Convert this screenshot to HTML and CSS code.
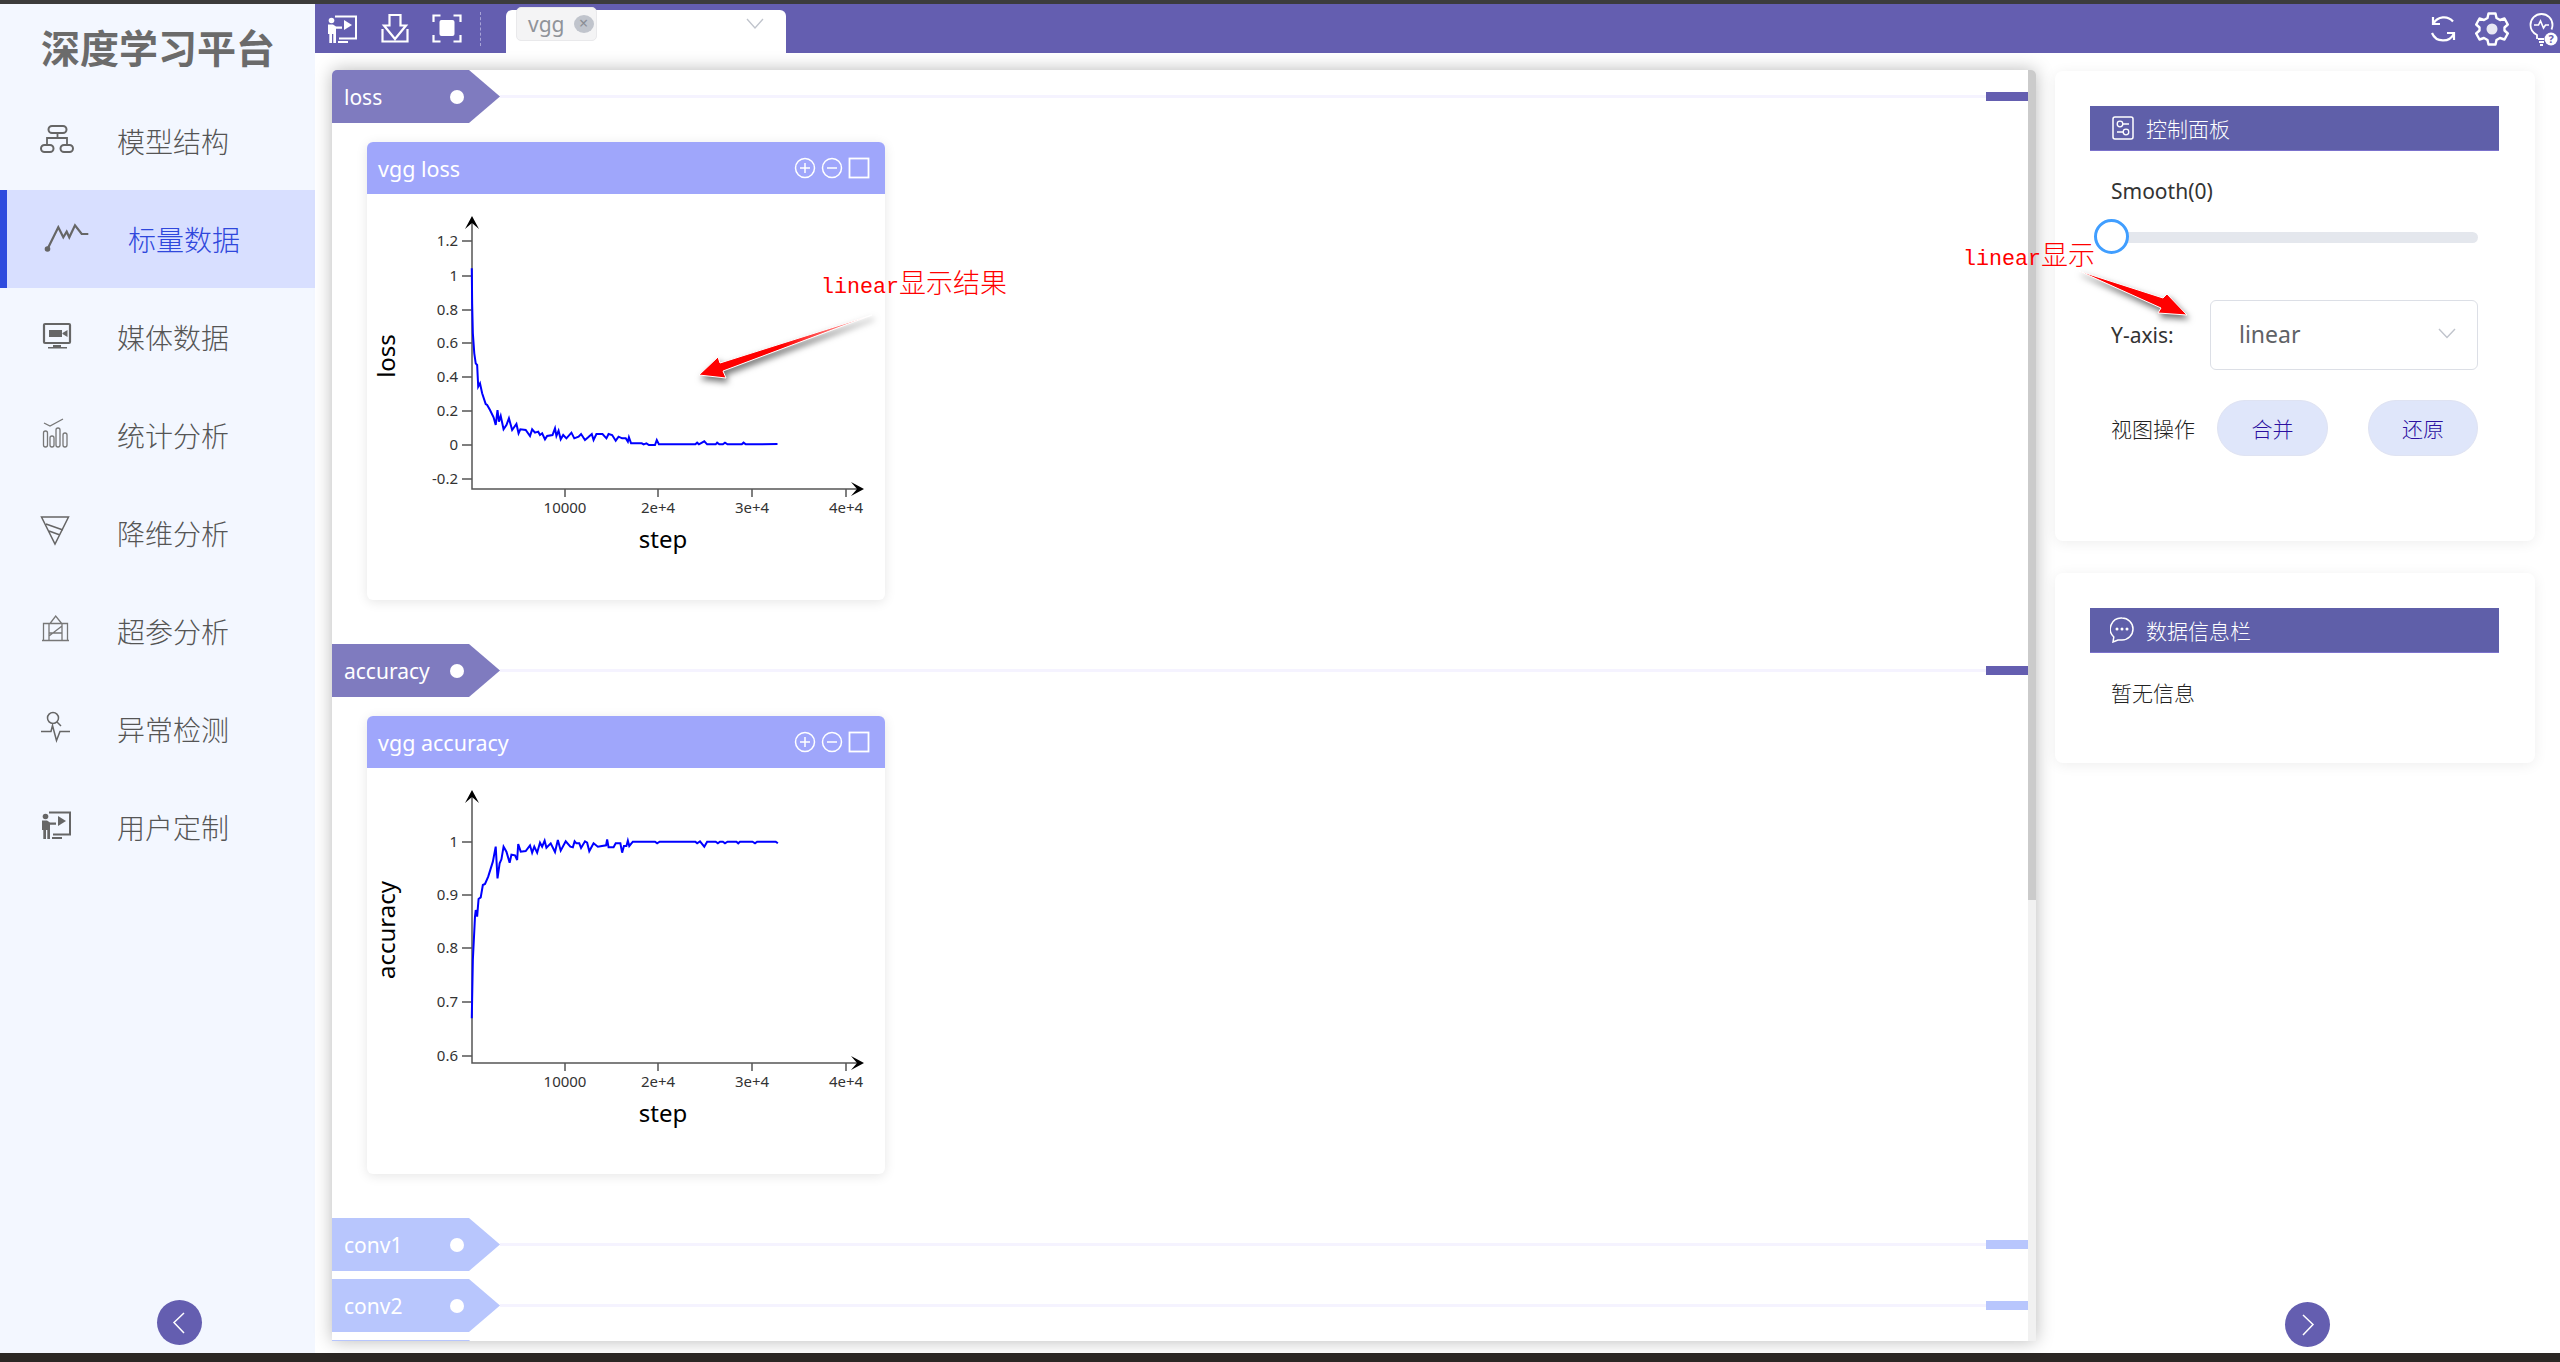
FILE: index.html
```html
<!DOCTYPE html>
<html lang="zh-CN">
<head>
  <meta charset="UTF-8" />
  <title>深度学习平台</title>
  <link rel="stylesheet" href="styles.css">
</head>
<body>

  <svg class="defs" width="0" height="0">
    <symbol id="ic-present" viewBox="0 0 31 28">
      <circle cx="4.500" cy="5.500" r="2.800" fill="currentColor"/>
      <path d="M1 9.500h5l3 2h6v2.300H9V28H6.300v-9H5v9H2.300v-9H1z" fill="currentColor"/>
      <path d="M8 1.500h21v22H12M11 27h10" fill="none" stroke="currentColor" stroke-width="2"/>
      <path d="M17 5l8 5-8 5z" fill="currentColor"/>
    </symbol>
    <symbol id="ic-circle-plus" viewBox="0 0 22 22">
      <circle cx="11" cy="11" r="9.500" fill="none" stroke="currentColor" stroke-width="1.500"/>
      <path d="M6 11h10M11 6v10" stroke="currentColor" stroke-width="1.500"/>
    </symbol>
    <symbol id="ic-circle-minus" viewBox="0 0 22 22">
      <circle cx="11" cy="11" r="9.500" fill="none" stroke="currentColor" stroke-width="1.500"/>
      <path d="M6 11h10" stroke="currentColor" stroke-width="1.500"/>
    </symbol>
    <symbol id="ic-square" viewBox="0 0 22 22">
      <rect x="1.500" y="1.500" width="19" height="19" fill="none" stroke="currentColor" stroke-width="1.800"/>
    </symbol>
    <symbol id="axes" viewBox="367 194 518 406">
      <path d="M472 222V489H857" fill="none" stroke="#555" stroke-width="1.500"/>
      <path d="M472 216l7 13-7-6-7 6z" fill="#000"/>
      <path d="M864 489l-13-7 6 7-6 7z" fill="#000"/>
      <path d="M565 489v8M658 489v8M752 489v8M846 489v8" stroke="#555" stroke-width="1.500"/>
    </symbol>
  </svg>

  <div class="app">
    <nav class="sidebar">
      <div class="logo">深度学习平台</div>
      <ul class="menu">
        <li class="menu-item">
          <svg class="menu-icon" viewBox="0 0 36 32"><path d="M17.500 8v5M7 20v-7h20v7" fill="none" stroke="#666" stroke-width="1.800"/><rect x="8.500" y="1" width="18" height="7" rx="3.500" fill="none" stroke="#666" stroke-width="2"/><rect x="1" y="20" width="12.500" height="7" rx="3.500" fill="none" stroke="#666" stroke-width="2"/><rect x="20.500" y="20" width="12.500" height="7" rx="3.500" fill="none" stroke="#666" stroke-width="2"/></svg>
          模型结构
        </li>
        <li class="menu-item active">
          <svg class="menu-icon" viewBox="0 0 46 32"><circle cx="2.500" cy="26" r="2.800" fill="#666"/><path d="M2.500 26L13.300 4.300l5 10 3.400-5.600 2.600 5.600L30 2.300 36.700 11h6.600" fill="none" stroke="#666" stroke-width="2.200"/></svg>
          标量数据
        </li>
        <li class="menu-item">
          <svg class="menu-icon" viewBox="0 0 36 32"><rect x="4" y="3" width="26" height="19" rx="1" fill="none" stroke="#666" stroke-width="2.200"/><path d="M9 9h13v7H9zM22.500 12l5-3v7l-5-3z" fill="#666"/><path d="M13 24h8v2H13zM8 26h19v1.500H8z" fill="#666"/></svg>
          媒体数据
        </li>
        <li class="menu-item">
          <svg class="menu-icon" viewBox="0 0 36 32"><g fill="none" stroke="#777" stroke-width="1.300"><rect x="3.500" y="12" width="4" height="16" rx="2"/><rect x="10" y="17" width="4" height="11" rx="2"/><rect x="16" y="9" width="4" height="19" rx="2"/><rect x="23" y="14" width="4" height="14" rx="2"/><path d="M4 4l6 3 13-7"/></g></svg>
          统计分析
        </li>
        <li class="menu-item">
          <svg class="menu-icon" viewBox="0 0 36 32"><path d="M1.500 0h27L15 27zM6 7l17 6M9 14l11 4" fill="none" stroke="#666" stroke-width="1.500"/></svg>
          降维分析
        </li>
        <li class="menu-item">
          <svg class="menu-icon" viewBox="0 0 36 32"><path d="M2 25.500h27M3.500 25V8.500h24V25M10 8.500L15.700 1l6 7.500M9 25V8.500M22 25V8.500M9 18h13M9 21l13-10" fill="none" stroke="#777" stroke-width="1.300"/></svg>
          超参分析
        </li>
        <li class="menu-item">
          <svg class="menu-icon" viewBox="0 0 36 32"><circle cx="13" cy="5" r="5.500" fill="none" stroke="#666" stroke-width="1.500"/><path d="M17 9l4 4M1 18.500h10l1.500-6 4 15 3.500-9h10" fill="none" stroke="#666" stroke-width="1.500"/></svg>
          异常检测
        </li>
        <li class="menu-item">
          <svg class="menu-icon" viewBox="0 0 36 32"><use href="#ic-present" x="1" y="0" width="31" height="28" color="#666"/></svg>
          用户定制
        </li>
      </ul>
      <button class="float-btn float-left"><svg viewBox="0 0 45 45"><path d="M27 13L17 22.500 27 33" fill="none" stroke="#fff" stroke-width="1.500"/></svg></button>
    </nav>

    <div class="workspace">
      <header class="topbar">
        <svg class="tool-icon" width="31" height="28"><use href="#ic-present"/></svg>
        <svg class="tool-icon tool-gap" width="28" height="29" viewBox="0 0 28 29"><path d="M8.500 1h11v10.500h5.500L14 25 3 11.500h5.500zM1.500 15v12.500h25V15" fill="none" stroke="currentColor" stroke-width="2.200"/></svg>
        <svg class="tool-icon tool-gap" width="30" height="29" viewBox="0 0 30 29"><path d="M1.500 8V1.500h7M21.500 1.500h7V8M1.500 21v6.500h7M21.500 27.500h7V21" fill="none" stroke="currentColor" stroke-width="2.200"/><rect x="7.500" y="6" width="15" height="16" rx="2" fill="currentColor"/></svg>
        <span class="tool-sep"></span>
        <div class="tab">
          <span class="chip">vgg <i class="chip-close">×</i></span>
          <svg class="tab-arrow" width="18" height="11" viewBox="0 0 18 11"><path d="M1 1l8 9 8-9" fill="none" stroke="#c0c4cc" stroke-width="1.300"/></svg>
        </div>
        <div class="top-right">
          <svg width="27" height="27" viewBox="0 0 27 27"><path d="M23 6.500A12 12 0 0 0 3.500 8.500M2 18A12 12 0 0 0 24 18.500M3 2v7h7M24 25v-7h-7" fill="none" stroke="currentColor" stroke-width="2.200"/></svg>
          <svg width="34" height="34" viewBox="0 0 34 34"><path d="M13.500 1.500h7l1 4.500 3.500 2 4.500-1.500 3.300 6-3.300 3v3l3.300 3-3.300 6-4.500-1.500-3.500 2-1 4.500h-7l-1-4.500-3.500-2-4.500 1.500-3.300-6 3.300-3v-3l-3.300-3 3.300-6L9 8l3.500-2z" fill="none" stroke="currentColor" stroke-width="2.400" stroke-linejoin="round"/><circle cx="17" cy="17" r="5.500" fill="currentColor" opacity=".85"/></svg>
          <svg class="bulb" width="30" height="36" viewBox="0 0 30 36"><path d="M10 28v-4C6 22 3.500 18 3.500 14a11 11 0 0 1 22 0c0 1.500-.3 3-1 4.500" fill="none" stroke="currentColor" stroke-width="1.800"/><path d="M7 14h4.500l2-4 3 7 2-3h3.500" fill="none" stroke="currentColor" stroke-width="1.600"/><path d="M11 28h6M12 31h5M13 34h3" stroke="currentColor" stroke-width="1.800"/><circle cx="24" cy="28" r="6.500" fill="currentColor"/><text class="bulb-q" x="24" y="32">?</text></svg>
        </div>
      </header>

      <div class="content">
        <main class="panel">
          <div class="panel-scroll">
            <section class="group">
              <div class="group-head">
                <div class="group-tag tag-open">loss<span class="tag-dot"></span></div>
                <div class="group-line"></div>
                <div class="group-mark"></div>
              </div>
              <div class="chart-card">
                <div class="card-head">
                  vgg loss
                  <span class="card-tools">
                    <svg width="22" height="22"><use href="#ic-circle-plus"/></svg>
                    <svg width="22" height="22"><use href="#ic-circle-minus"/></svg>
                    <svg width="22" height="22"><use href="#ic-square"/></svg>
                  </span>
                </div>
                <svg class="chart" viewBox="367 194 518 406" width="518" height="406">
                  <use href="#axes" x="367" y="194" width="518" height="406"/>
                  <path d="M462 241h10M462 276h10M462 310h10M462 343h10M462 377h10M462 411h10M462 445h10M462 479h10" stroke="#555" stroke-width="1.500"/>
                  <text class="tick-y" x="458" y="246">1.2</text>
                  <text class="tick-y" x="458" y="281">1</text>
                  <text class="tick-y" x="458" y="315">0.8</text>
                  <text class="tick-y" x="458" y="348">0.6</text>
                  <text class="tick-y" x="458" y="382">0.4</text>
                  <text class="tick-y" x="458" y="416">0.2</text>
                  <text class="tick-y" x="458" y="450">0</text>
                  <text class="tick-y" x="458" y="484">-0.2</text>
                  <text class="tick-x" x="565" y="513">10000</text>
                  <text class="tick-x" x="658" y="513">2e+4</text>
                  <text class="tick-x" x="752" y="513">3e+4</text>
                  <text class="tick-x" x="846" y="513">4e+4</text>
                  <text class="axis-name" x="663" y="548">step</text>
                  <text class="axis-name" transform="translate(395 356) rotate(-90)">loss</text>
                  <polyline class="curve" transform="translate(340 130) scale(.35714 .33333)" points="369,415 370,520 372,610 376,670 380,700 384,705 387,770 392,760 398,790 408,822 412,825 420,840 430,862 436,885 441,840 445,875 450,858 458,898 466,885 473,865 482,900 494,882 500,910 505,898 520,900 532,918 538,898 546,908 555,905 560,915 566,910 574,928 580,918 595,915 602,895 606,918 612,902 618,928 625,915 634,925 648,908 656,925 668,920 675,912 686,930 695,922 705,912 710,930 718,912 735,912 746,925 752,912 762,915 772,932 780,920 790,925 800,925 806,935 809,922 815,940 845,940 850,943 858,940 865,945 882,945 887,930 893,943 995,943 1000,938 1005,943 1020,934 1028,943 1052,943 1056,938 1062,943 1072,943 1078,938 1085,943 1125,943 1130,938 1136,943 1225,942"/>
                </svg>
              </div>
            </section>

            <section class="group">
              <div class="group-head">
                <div class="group-tag tag-open">accuracy<span class="tag-dot"></span></div>
                <div class="group-line"></div>
                <div class="group-mark"></div>
              </div>
              <div class="chart-card">
                <div class="card-head">
                  vgg accuracy
                  <span class="card-tools">
                    <svg width="22" height="22"><use href="#ic-circle-plus"/></svg>
                    <svg width="22" height="22"><use href="#ic-circle-minus"/></svg>
                    <svg width="22" height="22"><use href="#ic-square"/></svg>
                  </span>
                </div>
                <svg class="chart" viewBox="367 194 518 406" width="518" height="406">
                  <use href="#axes" x="367" y="194" width="518" height="406"/>
                  <path d="M462 268h10M462 321h10M462 374h10M462 428h10M462 482h10" stroke="#555" stroke-width="1.500"/>
                  <text class="tick-y" x="458" y="273">1</text>
                  <text class="tick-y" x="458" y="326">0.9</text>
                  <text class="tick-y" x="458" y="379">0.8</text>
                  <text class="tick-y" x="458" y="433">0.7</text>
                  <text class="tick-y" x="458" y="487">0.6</text>
                  <text class="tick-x" x="565" y="513">10000</text>
                  <text class="tick-x" x="658" y="513">2e+4</text>
                  <text class="tick-x" x="752" y="513">3e+4</text>
                  <text class="tick-x" x="846" y="513">4e+4</text>
                  <text class="axis-name" x="663" y="548">step</text>
                  <text class="axis-name" transform="translate(395 356) rotate(-90)">accuracy</text>
                  <polyline class="curve" transform="translate(340 126) scale(.35714 .33333)" points="369,955 372,780 378,650 380,630 384,650 388,597 394,592 400,555 406,552 415,530 428,485 436,440 441,535 447,490 452,478 458,440 466,455 475,488 480,464 490,466 496,480 499,432 506,455 520,453 532,436 538,458 544,440 552,458 560,428 566,440 573,422 578,443 590,430 602,456 610,420 618,452 632,424 645,440 652,442 657,424 662,430 670,430 675,444 686,424 692,428 698,454 710,430 722,440 745,436 748,418 752,442 766,442 772,430 785,430 790,458 795,438 802,438 806,422 810,438 820,425 882,425 888,430 895,425 995,425 1000,430 1008,424 1020,440 1028,425 1052,425 1058,430 1064,425 1072,425 1078,430 1085,425 1110,425 1115,430 1120,425 1155,425 1162,430 1168,425 1220,425 1226,430"/>
                </svg>
              </div>
            </section>

            <div class="group-head closed">
              <div class="group-tag">conv1<span class="tag-dot"></span></div>
              <div class="group-line"></div>
              <div class="group-mark"></div>
            </div>
            <div class="group-head closed">
              <div class="group-tag">conv2<span class="tag-dot"></span></div>
              <div class="group-line"></div>
              <div class="group-mark"></div>
            </div>
            <div class="group-head closed">
              <div class="group-tag"></div>
            </div>
          </div>
          <div class="scrollbar"><div class="scroll-thumb"></div></div>
        </main>

        <aside class="side">
          <div class="side-card control-card">
            <div class="side-head">
              <svg width="22" height="24" viewBox="0 0 22 24"><rect x="1" y="1" width="20" height="22" rx="2" fill="none" stroke="#fff" stroke-width="1.500"/><circle cx="8" cy="8" r="2.800" fill="none" stroke="#fff" stroke-width="1.300"/><circle cx="14" cy="16" r="2.800" fill="none" stroke="#fff" stroke-width="1.300"/><path d="M11 8h6M5 16h6" stroke="#fff" stroke-width="1.300"/></svg>
              控制面板
            </div>
            <div class="side-body">
              <div class="field-label">Smooth(0)</div>
              <div class="slider"><div class="slider-track"></div><div class="slider-handle"></div></div>
              <div class="field-row yaxis-row">
                <span>Y-axis:</span>
                <div class="select">
                  linear
                  <svg width="18" height="11" viewBox="0 0 18 11"><path d="M1 1l8 8.500L17 1" fill="none" stroke="#c0c4cc" stroke-width="1.400"/></svg>
                </div>
              </div>
              <div class="field-row view-row">
                <span class="cn-label">视图操作</span>
                <button class="pill">合并</button>
                <button class="pill">还原</button>
              </div>
            </div>
          </div>
          <div class="side-card info-card">
            <div class="side-head">
              <svg width="24" height="26" viewBox="0 0 24 26"><path d="M12 1a11 11 0 0 1 0 22c-1.500 0-3-.3-4 0l-5 2 .8-5A11 11 0 0 1 12 1z" fill="none" stroke="#fff" stroke-width="1.500"/><circle cx="7" cy="12" r="1.500" fill="#fff"/><circle cx="12" cy="12" r="1.500" fill="#fff"/><circle cx="17" cy="12" r="1.500" fill="#fff"/></svg>
              数据信息栏
            </div>
            <div class="side-body info-text cn-label">暂无信息</div>
          </div>
        </aside>
        <button class="float-btn float-right"><svg viewBox="0 0 45 45"><path d="M18 13l10 9.500L18 33" fill="none" stroke="#fff" stroke-width="1.500"/></svg></button>
      </div>
    </div>
  </div>

  <!-- red notes drawn over the screenshot -->
  <div class="note note-chart"><span>linear</span>显示结果</div>
  <div class="note note-select"><span>linear</span>显示</div>
  <svg class="arrows" width="2560" height="1362" viewBox="0 0 2560 1362">
    <defs>
      <linearGradient id="tail1" x1="872" y1="315" x2="780" y2="345" gradientUnits="userSpaceOnUse"><stop offset="0" stop-color="#ffc4c4"/><stop offset="1" stop-color="#f00"/></linearGradient>
    </defs>
    <path class="arrow" fill="url(#tail1)" d="M872 315L723 371l3 7-27-3 19-18 2 6z"/>
    <path class="arrow" fill="#f00" d="M2079 271l84 27 4-4 20 21-29-2 3-5z"/>
  </svg>

</body>
</html>
```

FILE: styles.css
```css
* { box-sizing: border-box; }
html, body { height: 100%; }
body {
  margin: 0;
  overflow: hidden;
  position: relative;
  font-family: "Noto Sans", "Noto Sans CJK SC", sans-serif;
  background-color: #2b2724;
  color: #333;
}
.defs { position: absolute; }
.app {
  display: flex;
  height: 1353px;
  border-top: 4px solid #3c3c3c;
}

/* left menu */
.sidebar {
  position: relative;
  width: 315px;
  flex: none;
  background-color: #f3f7ff;
}
.logo {
  height: 88px;
  padding: 17px 0 0 41px;
  font-size: 39px;
  line-height: 54px;
  font-weight: 700;
  color: #6b6b6b;
}
.menu { list-style: none; margin: 0; padding: 0; }
.menu-item {
  display: flex;
  align-items: center;
  height: 98px;
  padding-left: 40px;
  font-size: 28px;
  font-weight: 300;
  color: #555;
}
.menu-icon {
  width: 36px;
  height: 32px;
  margin-right: 41px;
  flex: none;
  overflow: visible;
}
.menu-item.active {
  padding-left: 38px;
  border-left: 7px solid #2e4bde;
  background-color: #d8dfff;
  color: #2f47dc;
}
.menu-item.active .menu-icon { width: 46px; margin-right: 37px; }

.float-btn {
  position: absolute;
  width: 45px;
  height: 45px;
  padding: 0;
  border: none;
  border-radius: 50%;
  background-color: #645eb0;
}
.float-btn svg { display: block; }
.float-left { left: 157px; bottom: 8px; }
.float-right { left: 1970px; bottom: 6px; }

/* top bar */
.workspace {
  flex: 1;
  display: flex;
  flex-direction: column;
  min-width: 0;
  background-color: #fff;
}
.topbar {
  display: flex;
  align-items: center;
  height: 49px;
  flex: none;
  padding-left: 12px;
  background-color: #645eb0;
  color: #fff;
}
.tool-icon { flex: none; }
.tool-gap { margin-left: 23px; }
.tool-sep {
  height: 34px;
  margin: 0 25px 0 18px;
  border-left: 1px dashed #a8a4d6;
}
.tab {
  display: flex;
  align-items: flex-start;
  align-self: flex-end;
  width: 280px;
  height: 43px;
  padding-left: 10px;
  background-color: #fff;
  border-radius: 6px 6px 0 0;
}
.chip {
  display: flex;
  align-items: center;
  height: 34px;
  width: 81px;
  margin-top: -3px;
  padding-left: 11px;
  font-size: 21px;
  color: #909399;
  background-color: #f4f4f5;
  border: 1px solid #e9e9eb;
  border-radius: 5px;
}
.chip-close {
  width: 20px;
  height: 18px;
  margin-left: 9px;
  border-radius: 50%;
  background-color: #c0c4cc;
  color: #8a8d94;
  font-style: normal;
  font-size: 16px;
  line-height: 17px;
  text-align: center;
}
.tab-arrow { margin: 8px 22px 0 auto; }
.top-right {
  display: flex;
  align-items: center;
  gap: 18px;
  margin-left: auto;
  margin-right: 3px;
}
.bulb { overflow: visible; }
.bulb-q {
  font-size: 11px;
  font-weight: 700;
  text-anchor: middle;
  fill: #645eb0;
}

/* charts */
.content {
  position: relative;
  display: flex;
  flex: 1;
  min-height: 0;
}
.panel {
  display: flex;
  width: 1704px;
  height: 1271px;
  margin: 17px 0 0 17px;
  flex: none;
  background-color: #fff;
  border-radius: 5px 5px 0 0;
  box-shadow: 0 0 18px rgba(0, 0, 0, 0.28);
  overflow: hidden;
}
.panel-scroll { flex: 1; min-width: 0; overflow: hidden; }
.scrollbar { width: 8px; flex: none; background-color: #f1f1f1; }
.scroll-thumb { height: 830px; background-color: #cbcbcb; }

.group { margin-bottom: 44px; }
.group-head {
  display: flex;
  align-items: center;
  height: 53px;
}
.group-head.closed { margin-bottom: 8px; }
.group-tag {
  display: flex;
  align-items: center;
  position: relative;
  width: 168px;
  height: 53px;
  flex: none;
  padding-left: 12px;
  font-size: 21px;
  color: #fff;
  background-color: #b8c6fd;
  clip-path: polygon(0 0, 137px 0, 100% 50%, 137px 100%, 0 100%);
}
.tag-open { background-color: #7f7bbf; }
.tag-dot {
  position: absolute;
  left: 118px;
  top: 20px;
  width: 14px;
  height: 14px;
  border-radius: 50%;
  background-color: #fff;
}
.group-line { flex: 1; height: 3px; background-color: #f5f3ff; }
.group-mark { width: 42px; height: 9px; background-color: #b8c6fd; }
.group:nth-child(-n+2) .group-mark { background-color: #645eb0; }

.chart-card {
  width: 518px;
  height: 458px;
  margin: 19px 0 0 35px;
  background-color: #fff;
  border-radius: 6px;
  box-shadow: 0 2px 12px rgba(0, 0, 0, 0.1);
}
.card-head {
  display: flex;
  align-items: center;
  height: 52px;
  padding-left: 11px;
  font-size: 21.5px;
  color: #fff;
  background-color: #9fa6fb;
  border-radius: 6px 6px 0 0;
}
.card-tools {
  display: flex;
  gap: 5px;
  margin-left: auto;
  margin-right: 15px;
  color: #fff;
}
.chart { display: block; }
.tick-y, .tick-x { font-size: 15px; fill: #333; }
.tick-y { text-anchor: end; }
.tick-x { text-anchor: middle; }
.axis-name { font-size: 24px; fill: #000; text-anchor: middle; }
.curve {
  fill: none;
  stroke: #00f;
  stroke-width: 2;
  vector-effect: non-scaling-stroke;
}

/* right column */
.side { width: 480px; margin: 18px 0 0 19px; flex: none; }
.side-card {
  padding: 35px 36px 0 35px;
  background-color: #fff;
  border-radius: 8px;
  box-shadow: 0 2px 14px rgba(0, 0, 0, 0.07);
  font-size: 21px;
}
.control-card { height: 470px; }
.info-card { height: 190px; margin-top: 32px; }
.side-head {
  display: flex;
  align-items: center;
  gap: 12px;
  height: 45px;
  padding-left: 22px;
  font-weight: 300;
  color: #fff;
  background-color: #5f5fa9;
  border-bottom: 1px solid #7b72cc;
}
.info-card .side-head { padding-left: 20px; }
.side-body { padding: 0 21px; }
.cn-label { font-weight: 300; color: #222; }
.field-label { margin-top: 25px; line-height: 30px; }
.slider { position: relative; height: 36px; margin-top: 13px; }
.slider-track {
  position: absolute;
  top: 13px;
  left: 0;
  right: 0;
  height: 11px;
  border-radius: 6px;
  background-color: #e4e7ed;
}
.slider-handle {
  position: absolute;
  top: 0;
  left: -17px;
  width: 35px;
  height: 35px;
  border: 3px solid #409eff;
  border-radius: 50%;
  background-color: #fff;
}
.field-row { display: flex; align-items: center; }
.yaxis-row { margin-top: 45px; justify-content: space-between; }
.select {
  display: flex;
  align-items: center;
  justify-content: space-between;
  width: 268px;
  height: 70px;
  padding: 0 21px 3px 28px;
  font-size: 23px;
  color: #606266;
  border: 1px solid #dcdfe6;
  border-radius: 6px;
}
.view-row { margin-top: 30px; }
.pill {
  width: 111px;
  height: 56px;
  margin-left: 22px;
  padding: 0;
  font-family: inherit;
  font-weight: 300;
  font-size: 21px;
  color: #2b0fa0;
  background-color: #dfe6fa;
  border: 1px solid #dfe3f2;
  border-radius: 28px;
}
.pill + .pill { width: 110px; margin-left: 40px; }
.info-text { margin-top: 25px; line-height: 30px; }

/* annotations */
.note {
  position: absolute;
  font-family: "Noto Sans CJK SC", sans-serif;
  font-weight: 300;
  font-size: 27px;
  line-height: 30px;
  color: #f00;
  white-space: nowrap;
}
.note span { font-family: "Liberation Mono", monospace; font-weight: 400; font-size: 21.7px; }
.note-chart { left: 821px; top: 267px; }
.note-select { left: 1963px; top: 239px; }
.arrows { position: absolute; left: 0; top: 0; pointer-events: none; }
.arrow {
  stroke: #fff;
  stroke-width: 1;
  filter: drop-shadow(2px 4px 3px rgba(0, 0, 0, 0.55));
}
```
